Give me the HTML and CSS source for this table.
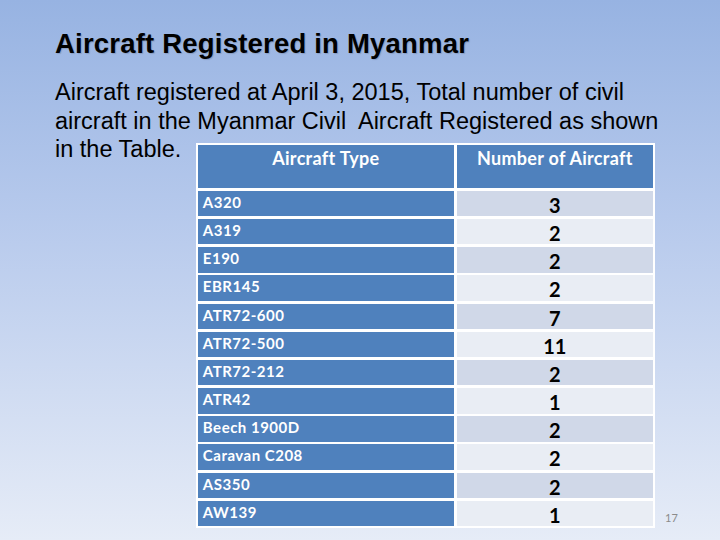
FILE: index.html
```html
<!DOCTYPE html>
<html>
<head>
<meta charset="utf-8">
<link rel="stylesheet" href="styles.css">
</head>
<body>
<div class="slide">
  <h1 class="title">Aircraft Registered in Myanmar</h1>
  <p class="text">Aircraft registered at April 3, 2015, Total number of civil<br>aircraft in the Myanmar Civil&nbsp; Aircraft Registered as shown<br>in the Table. <span class="table">
      <span class="cell head">Aircraft Type</span><span class="cell head">Number of Aircraft</span>
      <span class="cell type">A320</span><span class="cell num odd">3</span>
      <span class="cell type">A319</span><span class="cell num even">2</span>
      <span class="cell type">E190</span><span class="cell num odd">2</span>
      <span class="cell type">EBR145</span><span class="cell num even">2</span>
      <span class="cell type">ATR72-600</span><span class="cell num odd">7</span>
      <span class="cell type">ATR72-500</span><span class="cell num even">11</span>
      <span class="cell type">ATR72-212</span><span class="cell num odd">2</span>
      <span class="cell type">ATR42</span><span class="cell num even">1</span>
      <span class="cell type">Beech 1900D</span><span class="cell num odd">2</span>
      <span class="cell type">Caravan C208</span><span class="cell num even">2</span>
      <span class="cell type">AS350</span><span class="cell num odd">2</span>
      <span class="cell type">AW139</span><span class="cell num even">1</span>
    </span></p>
  <div class="page">17</div>
</div>
</body>
</html>
```
FILE: styles.css
```css
html, body {
  margin: 0;
  padding: 0;
}
body {
  width: 720px;
  height: 540px;
  overflow: hidden;
  background: linear-gradient(to bottom, #97b3e2 0%, #b6c9ec 40%, #e6ecf7 100%);
}
.slide {
  position: relative;
  width: 720px;
  height: 540px;
  box-sizing: border-box;
  padding: 29px 0 0 55px;
  font-family: "Liberation Sans", Arial, sans-serif;
  color: #000;
}
.title {
  margin: 0;
  font-size: 27.5px;
  letter-spacing: 0.2px;
  line-height: 30px;
  font-weight: bold;
  text-shadow: 1px 1px 1px rgba(0,0,0,0.15);
}
.text {
  margin: 19px 0 0 0;
  font-size: 23.5px;
  line-height: 28.5px;
  white-space: nowrap;
}
.table {
  display: inline-grid;
  vertical-align: top;
  margin-top: 8px;
  margin-left: 8px;
  grid-template-columns: 256px 196px;
  grid-template-rows: 43px;
  grid-auto-rows: 25.4px;
  gap: 2.8px 3px;
  padding: 2px;
  background: #fff;
  font-family: Lato, "Open Sans", sans-serif;
  font-weight: bold;
  white-space: nowrap;
  letter-spacing: 0;
}
.cell {
  display: block;
}
.head {
  background: #4f81bd;
  color: #fff;
  text-align: center;
  font-size: 18px;
  letter-spacing: 0.3px;
  line-height: 22px;
  padding-top: 2px;
}
.type {
  background: #4f81bd;
  color: #fff;
  font-size: 15px;
  letter-spacing: 0.5px;
  line-height: 22px;
  padding-left: 5px;
}
.num {
  color: #000;
  text-align: center;
  font-size: 20px;
  line-height: 29px;
}
.odd { background: #d0d8e8; }
.even { background: #e9edf4; }
.page {
  position: absolute;
  left: 665px;
  top: 511px;
  font-family: Lato, "Open Sans", sans-serif;
  font-size: 11px;
  color: #8b8b8b;
}
```
